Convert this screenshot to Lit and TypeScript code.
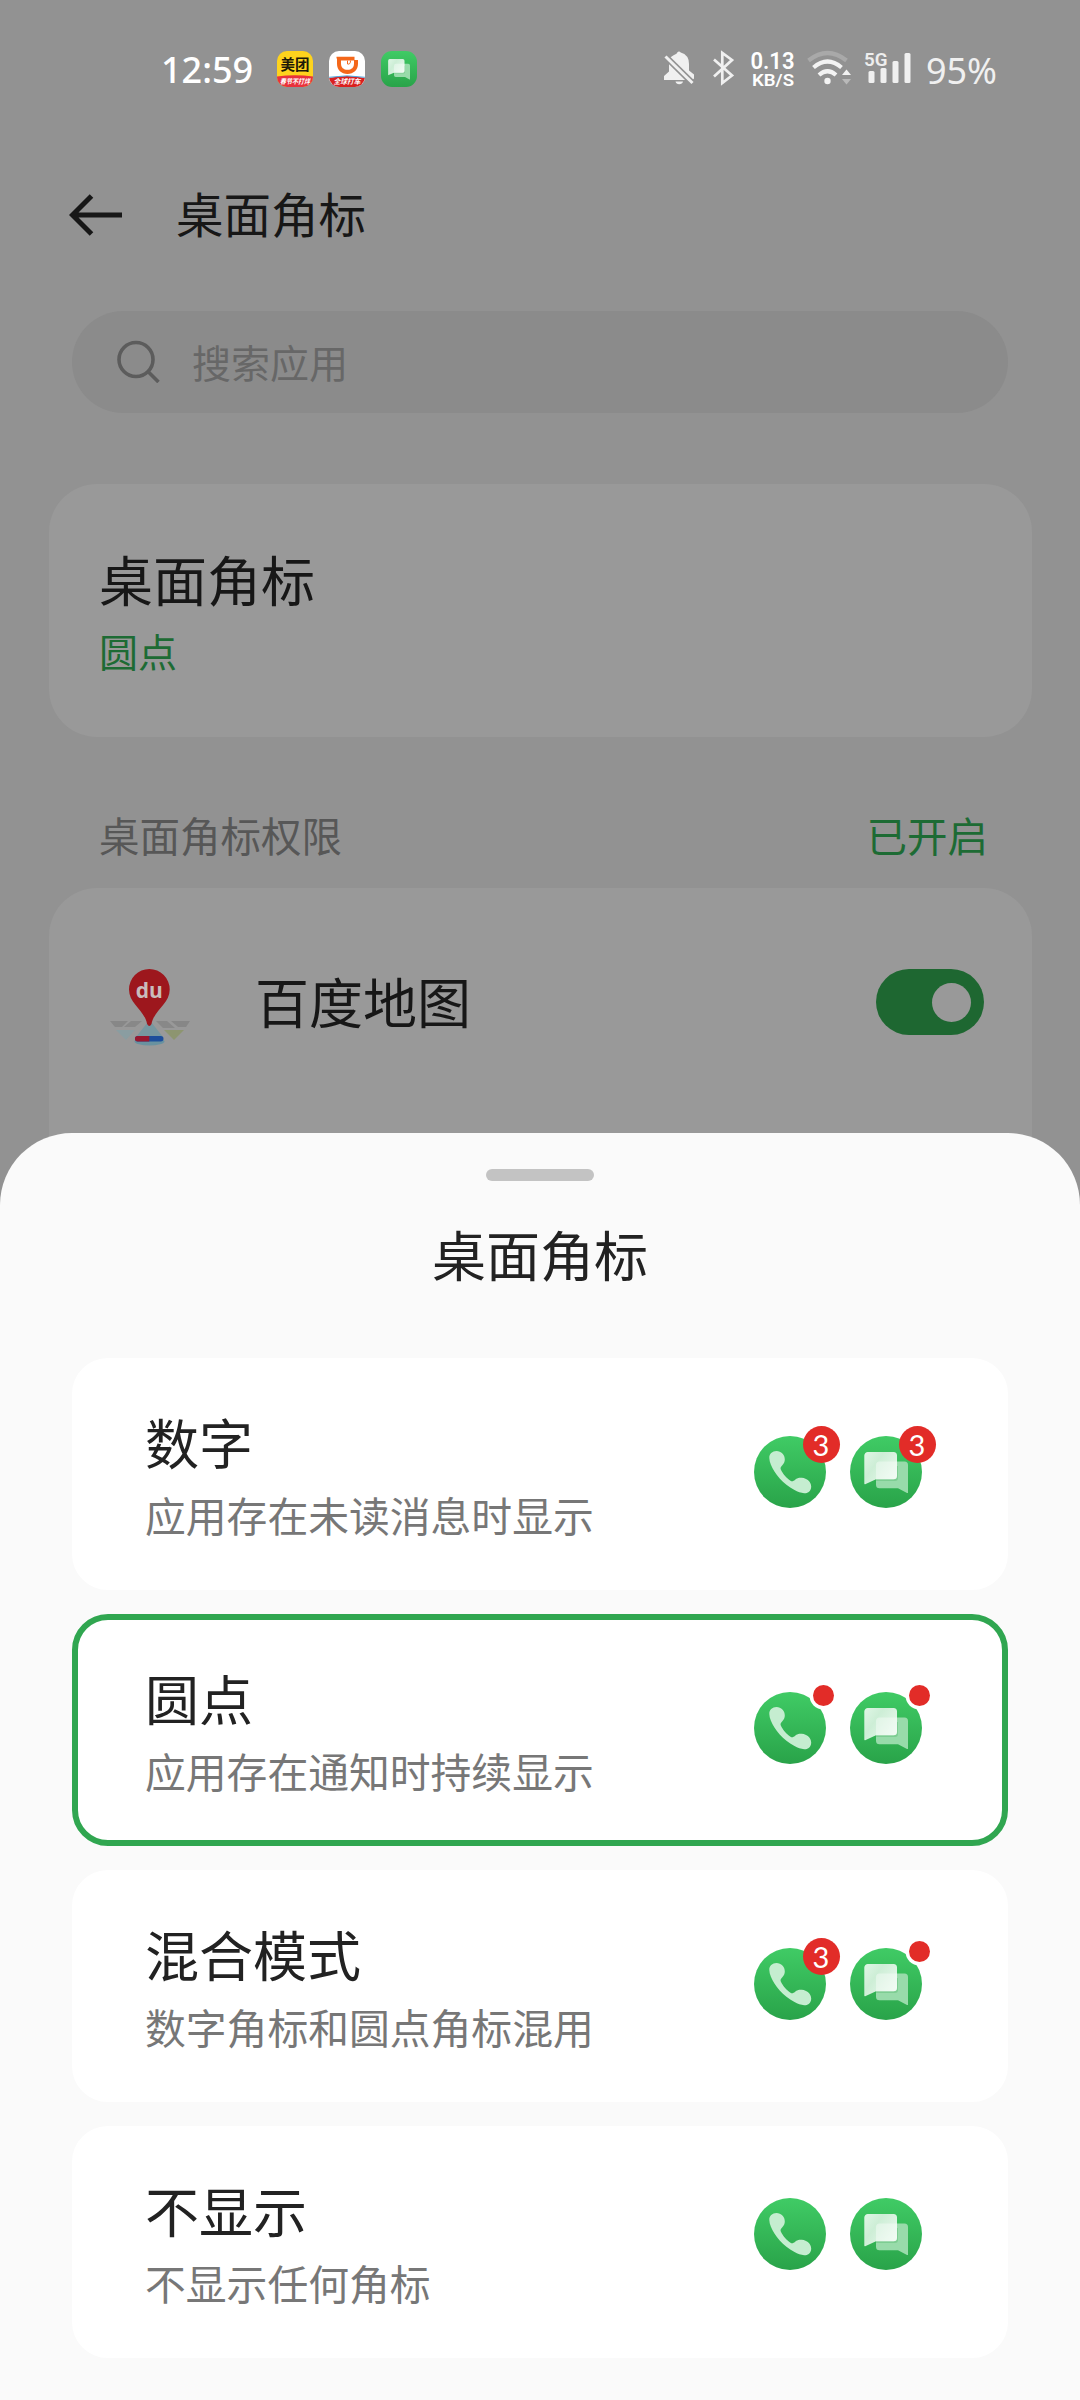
import { LitElement, html, svg, css, nothing } from "lit";
import { customElement, property } from "lit/decorators.js";

type Badge = "none" | "count" | "dot";

interface Option {
  title: string;
  detail: string;
  phone: Badge;
  message: Badge;
  selected?: boolean;
}

const OPTIONS: Option[] = [
  { title: "数字", detail: "应用存在未读消息时显示", phone: "count", message: "count" },
  { title: "圆点", detail: "应用存在通知时持续显示", phone: "dot", message: "dot", selected: true },
  { title: "混合模式", detail: "数字角标和圆点角标混用", phone: "count", message: "dot" },
  { title: "不显示", detail: "不显示任何角标", phone: "none", message: "none" },
];

const phoneGlyph = svg`
  <path fill="#c5edd0" d="M15.3 22c-.3-4 3-7 7.200-7 4.700 0 8.300 3.700 8.300 8.400 0 2.300-.8 4-2.300 5.600-1.600 1.700-2.400 2.600-1.700 4.400 1.700 4 6 8.800 9.700 11.300 1.700 1.100 2.900.4 4.600-1 1.900-1.500 4-2.100 6.800-1.900 5 .4 9.300 4.200 9.300 8.700 0 4.200-3 7-7 6.800-3.200-.2-6.600-1.400-9.700-3.200C29 47.600 20.500 38 16.800 28.500c-.9-2.300-1.400-4.400-1.500-6.500z"/>`;

const messageGlyph = svg`
  <path fill="#98dbaa" d="M29.500 25.600h25a3.500 3.500 0 0 1 3.500 3.500V56.400q0 1-1 .5L48 52.200H29.500a3.500 3.500 0 0 1-3.500-3.500V29.100a3.500 3.500 0 0 1 3.500-3.500z"/>
  <path fill="#1f9a41" opacity=".22" d="M26 30h22v12a3 3 0 0 1-3 3H26z"/>
  <path fill="url(#bubble)" d="M18 16h25.500a3.500 3.500 0 0 1 3.500 3.500v20.300a3.500 3.500 0 0 1-3.500 3.500H26l-10.800 4.900q-.9.300-.9-.7V19.500A3.500 3.500 0 0 1 18 16z"/>
  <path fill="#fff" opacity=".38" d="M29.500 25.600H47v14.200a3.500 3.500 0 0 1-3.500 3.500H26V29.100a3.500 3.500 0 0 1 3.500-3.500z"/>`;

const gradients = svg`
  <defs>
    <linearGradient id="green" x1="0" y1="0" x2="0" y2="1">
      <stop offset="0" stop-color="#40cb65"/><stop offset="1" stop-color="#29a349"/>
    </linearGradient>
    <linearGradient id="bubble" x1="0" y1="0" x2="1" y2=".7">
      <stop offset="0" stop-color="#e0f6e6"/><stop offset=".4" stop-color="#cdeed6"/><stop offset="1" stop-color="#e8f8ec"/>
    </linearGradient>
  </defs>`;

@customElement("badge-icon")
export class BadgeIcon extends LitElement {
  @property() kind: "phone" | "message" = "phone";
  @property() badge: Badge = "none";

  static styles = css`
    :host { display: block; width: 72px; height: 72px; }
    .icon { display: block; width: 72px; height: 72px; overflow: visible; }
    .count { font-family: Lato, "Noto Sans", sans-serif; font-weight: 400; font-size: 29px; fill: #fff; }
  `;

  render() {
    return html`<svg class="icon" viewBox="0 0 72 72">
      ${gradients}
      <circle cx="36" cy="36" r="36" fill="url(#green)"></circle>
      ${this.kind === "phone" ? phoneGlyph : messageGlyph}
      ${this.badge === "count"
        ? svg`<circle cx="67.500" cy="8.500" r="18.500" fill="#e22c28"/>
              <text class="count" x="67" y="19.800" text-anchor="middle">3</text>`
        : this.badge === "dot"
        ? svg`<circle cx="69.500" cy="3.500" r="14" fill="#fff"/>
              <circle cx="69.500" cy="3.500" r="10.500" fill="#e22c28"/>`
        : nothing}
    </svg>`;
  }
}

@customElement("status-bar")
export class StatusBar extends LitElement {
  static styles = css`
    :host { display: flex; align-items: center; justify-content: space-between; height: 138px;
      padding: 0 83px 0 161px; box-sizing: border-box; color: #fff; font-family: "Noto Sans", sans-serif; }
    .group { display: flex; align-items: center; }
    .time { font-size: 36px; font-weight: 500; line-height: 50px; width: 92px; margin-right: 24px; padding-top: 2px; }
    .apps { display: flex; gap: 16px; }
    .app, .sys { display: block; overflow: visible; }
    .brand { font: 700 14.500px "Noto Sans CJK SC", sans-serif; }
    .tag { font: italic 700 7px "Noto Sans CJK SC", sans-serif; fill: #fff; }
    .rate { font: 600 24px Roboto, "Noto Sans", sans-serif; fill: #fff; }
    .unit { font: 600 17px Roboto, "Noto Sans", sans-serif; fill: #fff; }
    .fiveg { font: 600 19px Roboto, "Noto Sans", sans-serif; fill: #eee; }
    .battery { font-size: 36px; line-height: 50px; color: #f0f0f0; margin-left: 14px; padding-top: 3px; }
  `;

  render() {
    return html`
      <div class="group">
        <span class="time">12:59</span>
        <div class="apps">
          <svg class="app" width="36" height="36" viewBox="0 0 36 36">
            <rect width="36" height="36" rx="10" fill="#fed31d"></rect>
            <path d="M0 25.500Q18 23 36 25.500V26A10 10 0 0 1 26 36H10A10 10 0 0 1 0 26z" fill="#e8323c"></path>
            <text class="brand" x="18" y="19" text-anchor="middle" fill="#1d1a08">美团</text>
            <text class="tag" x="18" y="32.800" text-anchor="middle" textLength="30" lengthAdjust="spacingAndGlyphs">春节不打烊</text>
          </svg>
          <svg class="app" width="36" height="36" viewBox="0 0 36 36">
            <rect width="36" height="36" rx="10" fill="#fff"></rect>
            <path d="M.2 27Q18 23 35.800 27A10 10 0 0 1 26 36H10A10 10 0 0 1 .2 27z" fill="#d9201f"></path>
            <path d="M.1 26.300Q18 23.400 35.900 26.300" stroke="#4aa8e0" stroke-width="1" fill="none"></path>
            <path d="M7.500 5.800H25.500V9H29V12.800C29 19 24.500 23 18.500 23C12.300 23 8 19 8 12.800V8.500Q8 7.500 7.500 7z" fill="#f4671a"></path>
            <path d="M12 9.600H25V12.500C25 16.500 22.500 18.800 18.500 18.800C14.500 18.800 12 16.500 12 12.500z" fill="#fff"></path>
            <path d="M18.500 9.600V13Q21.500 13.800 21.500 9.600" fill="none" stroke="#f4671a" stroke-width="1"></path>
            <text class="tag" x="18" y="33" text-anchor="middle" textLength="27" lengthAdjust="spacingAndGlyphs">全球打车</text>
          </svg>
          <svg class="app" width="36" height="36" viewBox="0 0 72 72">
            ${gradients}
            <rect width="72" height="72" rx="22" fill="url(#green)"></rect>
            ${messageGlyph}
          </svg>
        </div>
      </div>
      <div class="group">
        <svg class="sys" width="248" height="48" viewBox="664 46 248 48">
          <g fill="#f0f0f0">
            <path d="M674 56Q677.300 54.800 677.300 53.600Q679 51.200 680.700 53.600Q689 56 689 65V71.500L694 75.500V79.500L693 80.500H691L669.500 59.500Q671.500 57 674 56z"></path>
            <path d="M669 62.500L686.500 81H664V77L669 72.500z"></path>
            <path d="M675.500 82.500H683Q682.300 85.300 679.200 85.300Q676.200 85.300 675.500 82.500z"></path>
          </g>
          <path d="M665.500 57.500L692.500 84" stroke="#929292" stroke-width="6"></path>
          <path d="M665.500 57.500L692.500 84" stroke="#f0f0f0" stroke-width="3"></path>
          <path d="M714 60.500L732 76.500L722.300 84V54L732 61L714 77.500" fill="none" stroke="#f0f0f0" stroke-width="2.700"></path>
          <text class="rate" x="750.500" y="70.300" textLength="44" lengthAdjust="spacingAndGlyphs">0.13</text>
          <text class="unit" x="752" y="87.300" textLength="42" lengthAdjust="spacingAndGlyphs">KB/S</text>
          <path d="M808.500 61.500Q827.500 46.500 846.500 61.500" fill="none" stroke="#a9a9a9" stroke-width="4.200"></path>
          <path d="M813.500 68.500Q827.500 56.500 841.500 68.500M819 76Q827.500 68.500 836 76" fill="none" stroke="#f3f3f3" stroke-width="4.200"></path>
          <circle cx="827.500" cy="82" r="3.200" fill="#f3f3f3"></circle>
          <path d="M846.500 70.500L851 76H842z" fill="#f3f3f3"></path>
          <path d="M846.500 85.500L851 80H842z" fill="#b9b9b9"></path>
          <text class="fiveg" x="864" y="67.300" textLength="23.500" lengthAdjust="spacingAndGlyphs">5G</text>
          <g fill="#f0f0f0">
            <rect x="868.500" y="72" width="6" height="12" rx="1.500"></rect>
            <rect x="880.500" y="69" width="6" height="15" rx="1.500"></rect>
            <rect x="892.500" y="62" width="6" height="22" rx="1.500"></rect>
            <rect x="904.500" y="54" width="6" height="30" rx="1.500"></rect>
          </g>
        </svg>
        <span class="battery">95%</span>
      </div>
    `;
  }
}

@customElement("app-root")
export class AppRoot extends LitElement {
  static styles = css`
    :host { display: block; position: relative; width: 1080px; height: 2400px; overflow: hidden;
      background: #929292; font-family: "Noto Sans CJK SC", sans-serif; color: #171717; }
    * { box-sizing: border-box; }
    .header { display: flex; align-items: center; gap: 53px; height: 150px; padding: 4px 69px 0; }
    .header-title { font-size: 47.5px; line-height: 60px; margin-top: -5px; }
    .arrow, .lens { display: block; }
    .search { display: flex; align-items: center; gap: 32px; height: 102px; margin: 23px 72px 0;
      padding: 0 0 2px 44px; border-radius: 51px; background: #8b8b8b; color: #676767; font-size: 39px; line-height: 50px; }
    .card { margin: 0 48px 0 49px; border-radius: 48px; background: #999; }
    .mode { display: flex; flex-direction: column; height: 253px; margin-top: 71px; padding: 60px 50px; }
    .mode-title { font-size: 54px; line-height: 70px; }
    .mode-value { font-size: 39px; line-height: 50px; margin-top: 11px; color: #1d6b34; }
    .section { display: flex; justify-content: space-between; align-items: center; height: 151px;
      padding: 45px 92px 0 99px; font-size: 40.5px; line-height: 50px; color: #575757; }
    .enabled { color: #1d6b34; }
    .apps { display: flex; align-items: center; height: 400px; padding: 0 48px 172px 59px; }
    .pin { display: block; margin-top: 10px; }
    .app-name { flex: 1; margin-left: 63px; font-size: 54px; line-height: 70px; margin-top: -2px; }
    .du { font: 700 21px "Open Sans", sans-serif; fill: #c9bcbc; }
    .toggle { display: flex; align-items: center; justify-content: flex-end; width: 108px; height: 66px;
      padding-right: 13px; border-radius: 33px; background: #1e6731; }
    .knob { width: 39px; height: 39px; border-radius: 50%; background: #999; }
    .sheet { position: absolute; left: 0; right: 0; bottom: 0; height: 1267px; display: flex; flex-direction: column;
      align-items: center; padding: 36px 72px 0; border-radius: 72px 72px 0 0; background: #fafafa; color: #222; }
    .handle { flex: none; width: 108px; height: 12px; border-radius: 6px; background: #c3c3c3; }
    .sheet-title { font-size: 54px; line-height: 70px; margin-top: 38px; height: 139px; }
    .options { display: flex; flex-direction: column; gap: 24px; width: 936px; }
    .option { display: flex; justify-content: space-between; align-items: flex-start; height: 232px;
      padding: 0 80px 0 67px; border: 6px solid #fff; border-radius: 36px; background: #fff; }
    .selected { border-color: #30a650; }
    .copy { display: flex; flex-direction: column; padding-top: 43px; }
    .option-title { font-size: 54px; line-height: 70px; }
    .option-detail { font-size: 40.8px; line-height: 54px; margin-top: 11px; color: #777; }
    .previews { display: flex; gap: 24px; padding-top: 72px; }
    .plain { padding-top: 66px; }
  `;

  render() {
    return html`
      <status-bar></status-bar>
      <div class="header">
        <svg class="arrow" width="54" height="44" viewBox="0 0 54 44">
          <path d="M22.500 3L3.500 22L22.500 41M3.500 22H53" fill="none" stroke="#171717" stroke-width="5"></path>
        </svg>
        <span class="header-title">桌面角标</span>
      </div>
      <div class="search">
        <svg class="lens" width="44" height="44" viewBox="0 0 44 44">
          <circle cx="20" cy="20.500" r="17" fill="none" stroke="#5c5c5c" stroke-width="3.600"></circle>
          <path d="M31.500 32L42.500 43" stroke="#5c5c5c" stroke-width="3.600"></path>
        </svg>
        <span>搜索应用</span>
      </div>
      <div class="card mode">
        <span class="mode-title">桌面角标</span>
        <span class="mode-value">圆点</span>
      </div>
      <div class="section"><span>桌面角标权限</span><span class="enabled">已开启</span></div>
      <div class="card apps">
        <svg class="pin" width="84" height="84" viewBox="108 965 84 84">
          <path d="M110 1021H128L122 1027H115z" fill="#878787"></path>
          <path d="M131 1021H142L135 1027H124z" fill="#888"></path>
          <path d="M156 1021H167L175 1028H163z" fill="#888"></path>
          <path d="M171 1021H190L186 1027H178z" fill="#878787"></path>
          <path d="M116 1030H135L126 1040z" fill="#8a9da1"></path>
          <path d="M164 1030H184L174 1040z" fill="#8d9570"></path>
          <path d="M149.500 1020L136 1037H163z" fill="#7797a0"></path>
          <ellipse cx="149.500" cy="1041.500" rx="15" ry="4" fill="#6992a0"></ellipse>
          <rect x="135" y="1036" width="28.500" height="5.500" rx="2.700" fill="#1d4e9b"></rect>
          <path d="M149.300 1036H137.700a2.700 2.700 0 0 0 0 5.500H149.300z" fill="#98182f"></path>
          <path d="M149.300 969A20.400 20.400 0 0 1 169.700 989.500C169.700 1004 154 1010 151.500 1024Q149.300 1028 147.100 1024C144.500 1010 129 1004 129 989.500A20.400 20.400 0 0 1 149.300 969z" fill="#9d171d"></path>
          <text class="du" x="149.300" y="997.500" text-anchor="middle">du</text>
        </svg>
        <span class="app-name">百度地图</span>
        <div class="toggle"><div class="knob"></div></div>
      </div>
      <div class="sheet">
        <div class="handle"></div>
        <div class="sheet-title">桌面角标</div>
        <div class="options">
          ${OPTIONS.map(
            (o) => html`<div class="option ${o.selected ? "selected" : ""}">
              <div class="copy">
                <span class="option-title">${o.title}</span>
                <span class="option-detail">${o.detail}</span>
              </div>
              <div class="previews ${o.phone === "none" ? "plain" : ""}">
                <badge-icon kind="phone" badge=${o.phone}></badge-icon>
                <badge-icon kind="message" badge=${o.message}></badge-icon>
              </div>
            </div>`
          )}
        </div>
      </div>
    `;
  }
}
